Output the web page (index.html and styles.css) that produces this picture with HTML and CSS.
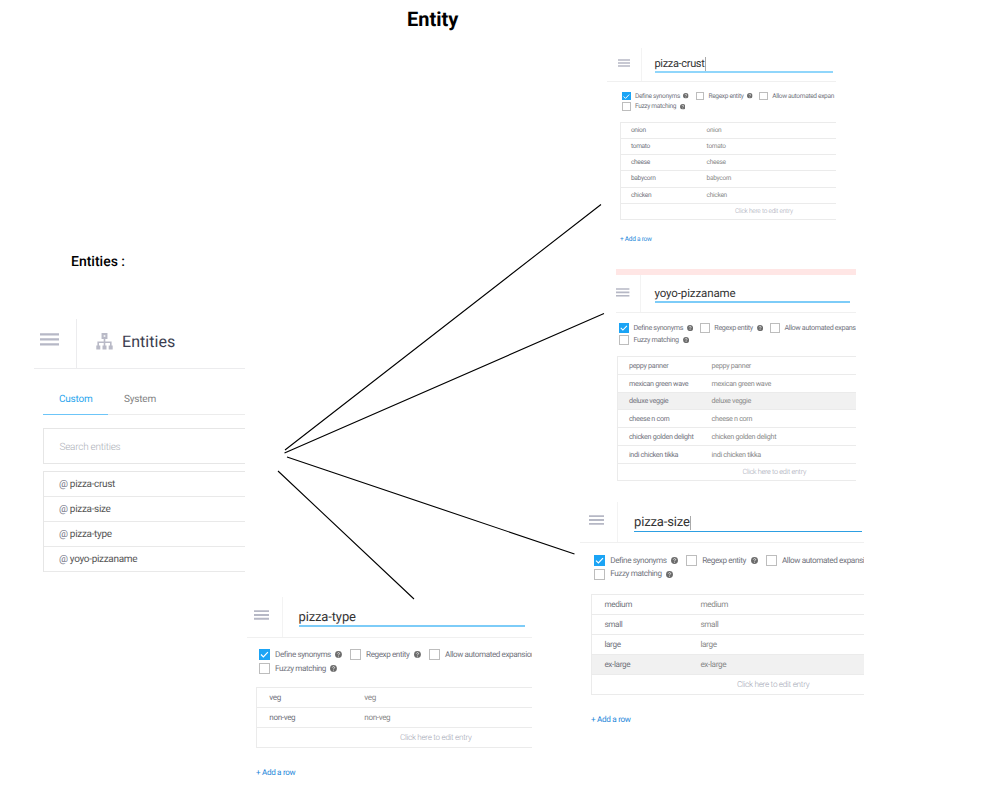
FILE: index.html
```html
<!DOCTYPE html>
<html lang="en">
<head>
<meta charset="utf-8">
<title>Entity</title>
<link rel="stylesheet" href="styles.css">
</head>
<body>
<svg class="defs" width="0" height="0" aria-hidden="true">
  <symbol id="menu" viewBox="0 0 16 10"><path d="M0 1h16M0 5h16M0 9h16" stroke="currentColor" stroke-width="2"/></symbol>
  <symbol id="check" viewBox="0 0 11 11"><path d="M2 5.6l2.4 2.4L9 3.2" fill="none" stroke="#fff" stroke-width="1.2"/></symbol>
  <symbol id="help" viewBox="0 0 14 14"><circle cx="7" cy="7" r="6.9" fill="#6b6b6b"/><path d="M4.8 5.3c.2-2.8 4.6-2.6 4.5-.1C9.2 6.7 7 6.700 7 8.300M7 9.500v1.800" fill="none" stroke="#fff" stroke-width="1.500"/></symbol>
</svg>
<main class="canvas">
  <h1 class="heading">Entity</h1>
  <h2 class="subheading">Entities :</h2>

  <svg class="links" viewBox="0 0 988 809"><path d="M285 450L601 204.500M284.500 453L604 313.500M287 457L574.500 554M278 471L414 599"/></svg>

  <section class="panel">
    <header class="panel-head">
      <div class="panel-menu"><svg viewBox="0 0 19 13"><path d="M0 1.300h19M0 6.300h19M0 11.300h19" stroke="currentColor" stroke-width="2.300"/></svg></div>
      <svg class="sitemap" viewBox="0 0 17 17"><path d="M8.500 5.500v8M2.200 13V9.300h12.600V13" fill="none" stroke="currentColor" stroke-width="1.600"/><path d="M6.600 1.100h3.800v3.800H6.600z" fill="none" stroke="currentColor" stroke-width="2.100"/><path d="M.3 12.400h4v4h-4zM6.500 12.400h4v4h-4zM12.700 12.400h4v4h-4z" fill="currentColor"/></svg>
      <span class="panel-title">Entities</span>
    </header>
    <nav class="tabs"><span class="tab active">Custom</span><span class="tab">System</span></nav>
    <div class="search">Search entities</div>
    <ul class="list">
      <li><i>@</i> pizza-crust</li>
      <li><i>@</i> pizza-size</li>
      <li><i>@</i> pizza-type</li>
      <li><i>@</i> yoyo-pizzaname</li>
    </ul>
  </section>

  <section class="card crust">
    <header class="head"><div class="menu"><svg><use href="#menu"/></svg></div><div class="name"><span class="caret">pizza-crust</span></div></header>
    <div class="options">
      <div class="row"><b class="box on"><svg><use href="#check"/></svg></b><span class="l1">Define synonyms</span><svg class="q"><use href="#help"/></svg><b class="box"></b><span class="l2">Regexp entity</span><svg class="q"><use href="#help"/></svg><b class="box"></b><span>Allow automated expan</span></div>
      <div class="row"><b class="box"></b><span class="l3">Fuzzy matching</span><svg class="q"><use href="#help"/></svg></div>
    </div>
    <div class="table">
      <div class="entry"><span>onion</span><span>onion</span></div>
      <div class="entry"><span>tomato</span><span>tomato</span></div>
      <div class="entry"><span>cheese</span><span>cheese</span></div>
      <div class="entry"><span>babycorn</span><span>babycorn</span></div>
      <div class="entry"><span>chicken</span><span>chicken</span></div>
      <div class="entry hint">Click here to edit entry</div>
    </div>
    <div class="add">+ Add a row</div>
  </section>

  <section class="card yoyo">
    <div class="alert"></div>
    <header class="head"><div class="menu"><svg><use href="#menu"/></svg></div><div class="name"><span>yoyo-pizzaname</span></div></header>
    <div class="options">
      <div class="row"><b class="box on"><svg><use href="#check"/></svg></b><span class="l1">Define synonyms</span><svg class="q"><use href="#help"/></svg><b class="box"></b><span class="l2">Regexp entity</span><svg class="q"><use href="#help"/></svg><b class="box"></b><span>Allow automated expans</span></div>
      <div class="row"><b class="box"></b><span class="l3">Fuzzy matching</span><svg class="q"><use href="#help"/></svg></div>
    </div>
    <div class="table">
      <div class="entry"><span>peppy panner</span><span>peppy panner</span></div>
      <div class="entry"><span>mexican green wave</span><span>mexican green wave</span></div>
      <div class="entry hover"><span>deluxe veggie</span><span>deluxe veggie</span></div>
      <div class="entry"><span>cheese n corn</span><span>cheese n corn</span></div>
      <div class="entry"><span>chicken golden delight</span><span>chicken golden delight</span></div>
      <div class="entry"><span>indi chicken tikka</span><span>indi chicken tikka</span></div>
      <div class="entry hint">Click here to edit entry</div>
    </div>
  </section>

  <section class="card size">
    <header class="head"><div class="menu"><svg><use href="#menu"/></svg></div><div class="name"><span class="caret">pizza-size</span></div></header>
    <div class="options">
      <div class="row"><b class="box on"><svg><use href="#check"/></svg></b><span class="l1">Define synonyms</span><svg class="q"><use href="#help"/></svg><b class="box"></b><span class="l2">Regexp entity</span><svg class="q"><use href="#help"/></svg><b class="box"></b><span>Allow automated expansi</span></div>
      <div class="row"><b class="box"></b><span class="l3">Fuzzy matching</span><svg class="q"><use href="#help"/></svg></div>
    </div>
    <div class="table">
      <div class="entry"><span>medium</span><span>medium</span></div>
      <div class="entry"><span>small</span><span>small</span></div>
      <div class="entry"><span>large</span><span>large</span></div>
      <div class="entry hover"><span>ex-large</span><span>ex-large</span></div>
      <div class="entry hint">Click here to edit entry</div>
    </div>
    <div class="add">+ Add a row</div>
  </section>

  <section class="card type">
    <header class="head"><div class="menu"><svg><use href="#menu"/></svg></div><div class="name"><span>pizza-type</span></div></header>
    <div class="options">
      <div class="row"><b class="box on"><svg><use href="#check"/></svg></b><span class="l1">Define synonyms</span><svg class="q"><use href="#help"/></svg><b class="box"></b><span class="l2">Regexp entity</span><svg class="q"><use href="#help"/></svg><b class="box"></b><span>Allow automated expansion</span></div>
      <div class="row"><b class="box"></b><span class="l3">Fuzzy matching</span><svg class="q"><use href="#help"/></svg></div>
    </div>
    <div class="table">
      <div class="entry"><span>veg</span><span>veg</span></div>
      <div class="entry"><span>non-veg</span><span>non-veg</span></div>
      <div class="entry hint">Click here to edit entry</div>
    </div>
    <div class="add">+ Add a row</div>
  </section>
</main>
</body>
</html>
```
FILE: styles.css
```css
* { box-sizing: border-box; }
body { margin: 0; background: #fff; font-family: Roboto, "Liberation Sans", sans-serif; text-rendering: geometricPrecision; }
svg { display: block; }
.defs { position: absolute; }
.canvas { position: relative; width: 988px; height: 809px; overflow: hidden; }
.heading, .subheading { position: absolute; margin: 0; color: #000; white-space: nowrap; }
.heading { left: 407px; top: 7px; font-size: 20px; line-height: 25px; font-weight: 700; }
.subheading { left: 71px; top: 253px; font-size: 14px; line-height: 18px; font-weight: 500; }
.links { position: absolute; left: 0; top: 0; width: 988px; height: 809px; fill: none; stroke: #000; stroke-width: 1.1px; }

.panel { position: absolute; left: 34px; top: 319px; width: 211px; overflow: hidden; white-space: nowrap; }
.panel-head { display: flex; align-items: center; height: 50px; border-bottom: 1px solid #ececee; }
.panel-menu { width: 43px; height: 49px; padding: 14px 0 0 6px; border-right: 1px solid #ececee; color: #b6b8c6; }
.panel-menu svg { width: 19px; height: 13px; }
.sitemap { width: 17px; height: 17px; margin: -5px 9px 0 19px; color: #b9bac7; }
.panel-title { font-size: 16px; line-height: 20px; letter-spacing: .06px; margin-top: -4px; color: #3b3e50; }
.tabs { display: flex; margin: 13px 0 0 9px; height: 33px; border-bottom: 1px solid #ececec; font-size: 10px; line-height: 35px; letter-spacing: -.2px; color: #828282; }
.tab { height: 33px; padding: 0 16px; }
.tab.active { width: 65px; color: #2ba6ee; border-bottom: 1px solid #6cc5f8; }
.search { margin: 13px 0 0 9px; height: 36px; border: 1px solid #e6e6e6; border-right: 0; padding-left: 15.500px; font-size: 10px; line-height: 37px; letter-spacing: -.25px; font-weight: 300; color: #adb0b8; }
.list { list-style: none; margin: 7px 0 0 9px; padding: 0; border: 1px solid #e6e6e6; border-width: 1px 0 0 1px; }
.list li { height: 25px; padding-left: 15px; border-bottom: 1px solid #e9e9e9; font-size: 10px; line-height: 25px; letter-spacing: -.32px; color: #555; }
.list i { font-style: normal; color: #77798a; }

.card { position: absolute; overflow: hidden; white-space: nowrap; font-size: calc(8.2px * var(--u)); letter-spacing: -.05em; color: #71737d; }
.alert { height: 6px; background: #ffe6e5; }
.head { display: flex; height: var(--head-h); border-bottom: 1px solid #f0f0f0; }
.menu { flex: none; width: var(--menu-w); padding: var(--menu-y) 0 0 var(--menu-x); border-right: 1px solid #f3f3f3; color: #b6b8c5; }
.menu svg { width: calc(15.5px * var(--u)); height: calc(10px * var(--u)); }
.name { width: var(--line-w); height: var(--line-y); margin-left: var(--name-x); display: flex; align-items: flex-end; border-bottom: 2px solid #7dccf8; font-size: var(--name-size); line-height: 17px; letter-spacing: -.01em; color: #333; }
.caret { border-right: 1px solid #aaa; height: 14px; line-height: 14px; margin-bottom: 2px; }
.options { height: var(--opt-h); padding: var(--opt-y) 0 0 var(--opt-x); }
.row { display: flex; align-items: center; height: calc(13.6px * var(--u)); }
.row span { line-height: calc(11px * var(--u)); flex: none; letter-spacing: -.05em; }
.box { flex: none; width: calc(11px * var(--u)); height: calc(11px * var(--u)); margin-right: calc(5.2px * var(--u)); border: 1px solid #bdbdbd; }
.box.on { background: #1ba4f5; border: 0; }
.box svg { width: 100%; height: 100%; }
.q { flex: none; width: calc(7px * var(--u)); height: calc(7px * var(--u)); margin-right: calc(8.2px * var(--u)); }
.l1 { width: calc(60.6px * var(--u)); }
.l2 { width: calc(48.4px * var(--u)); }
.l3 { width: calc(56px * var(--u)); }
.table { margin-left: var(--table-x); border: 1px solid #ebebeb; border-width: 1px 0 0 1px; }
.entry { display: grid; grid-template-columns: var(--col) 1fr; align-items: center; height: var(--row-h); padding-left: calc(12.4px * var(--u)); border-bottom: 1px solid #ebebeb; line-height: 11px; letter-spacing: -.045em; }
.entry span + span { color: #888; }
.entry.hover { background: #f1f1f1; }
.entry.hint { display: block; line-height: calc(var(--row-h) - 1px); padding-left: var(--hint-x); color: #a3a6b4; font-weight: 300; letter-spacing: -.036em; }
.add { margin: calc(18.5px * var(--u)) 0 0 var(--table-x); line-height: 12px; letter-spacing: -.04em; color: #1f88da; }

.crust { --u: .8; --col: 75.700px; --head-h: 34px; --menu-w: 35px; --menu-x: 11px; --menu-y: 10.5px; --line-w: 178.5px; --line-y: 25px; --name-x: 12.5px; --name-size: 11px; --opt-x: 15px; --opt-y: 8.500px; --opt-h: 40px; --table-x: 13px; --row-h: 16.15px; --hint-x: 114px; left: 607px; top: 48px; width: 229px; }
.crust .name { border-color: #90d6fb; letter-spacing: -.03em; }
.crust .caret { margin-bottom: 0; }
.crust .add { margin-top: 13.500px; }
.yoyo { --u: .88; --col: 82.700px; --head-h: 38px; --menu-w: 25px; --menu-x: 0px; --menu-y: 13px; --line-w: 195px; --line-y: 28px; --name-x: 13.5px; --name-size: 11.5px; --opt-x: 3.2px; --opt-y: 9px; --opt-h: 43px; --table-x: 1px; --row-h: 17.75px; --hint-x: 124.500px; left: 616px; top: 269px; width: 240px; }
.yoyo .name { line-height: 15px; }
.size { --u: 1; --col: 96px; --head-h: 41px; --menu-w: 38px; --menu-x: 8.500px; --menu-y: 13px; --line-w: 228px; --line-y: 30px; --name-x: 16px; --name-size: 13px; --opt-x: 14px; --opt-y: 11px; --opt-h: 51px; --table-x: 11px; --row-h: 20.100px; --hint-x: 145px; left: 580px; top: 502px; width: 284px; }
.size .name { border-bottom: 1px solid #2d9fe2; }
.size .caret { margin-bottom: 1px; }
.size .row span, .size .entry span { padding-top: 1px; }
.size .hint { padding-top: 1px; }
.type { --u: .99; --col: 95px; --head-h: 41px; --menu-w: 36px; --menu-x: 7px; --menu-y: 13px; --line-w: 226px; --line-y: 30px; --name-x: 15.500px; --name-size: 13px; --opt-x: 12px; --opt-y: 10px; --opt-h: 49px; --table-x: 9px; --row-h: 20px; --hint-x: 143px; left: 247px; top: 597px; width: 285px; }
.type .name { line-height: 15px; }
.type .add { margin-top: 17.5px; }
```
